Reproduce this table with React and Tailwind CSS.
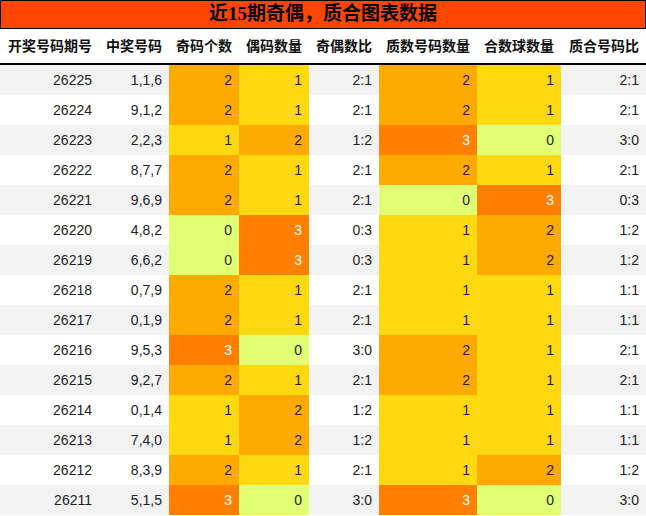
const rows = [
    ['26225', '1,1,6', 2, 1, '2:1', 2, 1, '2:1'],
    ['26224', '9,1,2', 2, 1, '2:1', 2, 1, '2:1'],
    ['26223', '2,2,3', 1, 2, '1:2', 3, 0, '3:0'],
    ['26222', '8,7,7', 2, 1, '2:1', 2, 1, '2:1'],
    ['26221', '9,6,9', 2, 1, '2:1', 0, 3, '0:3'],
    ['26220', '4,8,2', 0, 3, '0:3', 1, 2, '1:2'],
    ['26219', '6,6,2', 0, 3, '0:3', 1, 2, '1:2'],
    ['26218', '0,7,9', 2, 1, '2:1', 1, 1, '1:1'],
    ['26217', '0,1,9', 2, 1, '2:1', 1, 1, '1:1'],
    ['26216', '9,5,3', 3, 0, '3:0', 2, 1, '2:1'],
    ['26215', '9,2,7', 2, 1, '2:1', 2, 1, '2:1'],
    ['26214', '0,1,4', 1, 2, '1:2', 1, 1, '1:1'],
    ['26213', '7,4,0', 1, 2, '1:2', 1, 1, '1:1'],
    ['26212', '8,3,9', 2, 1, '2:1', 1, 2, '1:2'],
    ['26211', '5,1,5', 3, 0, '3:0', 3, 0, '3:0'],
];

const headers = ['开奖号码期号', '中奖号码', '奇码个数', '偶码数量', '奇偶数比', '质数号码数量', '合数球数量', '质合号码比'];

// colour by count value
const cellColor = {
    0: 'bg-[#e1ff73] text-[#222]',
    1: 'bg-[#ffd90f] text-[#222]',
    2: 'bg-[#ffaa00] text-[#222]',
    3: 'bg-[#ff8000] text-white',
};

const grid = 'grid grid-cols-[99px_70px_70px_70px_70px_98px_84px_85px]';

function Cell({ children, className = '' }) {
    return (
        <div className={`flex items-center justify-end pr-[7px] ${className}`}>
            {children}
        </div>
    );
}

export default function App() {
    return (
        <div className="w-[646px] h-[516px] bg-white overflow-hidden" style={{ fontFamily: '"Liberation Sans", "Noto Sans CJK SC", sans-serif' }}>
            <div
                className="h-[29px] bg-[#ff4500] border border-black flex items-center justify-center text-[19px] font-bold text-black"
                style={{ fontFamily: '"Liberation Serif", "Noto Sans CJK SC", serif' }}
            >
                近15期奇偶，质合图表数据
            </div>
            <div className={`${grid} h-[36px] border-b-2 border-black`}>
                {headers.map(h => (
                    <Cell key={h} className="text-[14px] font-bold text-[#111]">{h}</Cell>
                ))}
            </div>
            {rows.map((r, i) => (
                <div key={r[0]} className={`${grid} h-[30px] text-[14px] text-[#222] ${i % 2 === 0 ? 'bg-[#f3f3f3]' : 'bg-white'}`}>
                    <Cell>{r[0]}</Cell>
                    <Cell>{r[1]}</Cell>
                    <Cell className={cellColor[r[2]]}>{r[2]}</Cell>
                    <Cell className={cellColor[r[3]]}>{r[3]}</Cell>
                    <Cell>{r[4]}</Cell>
                    <Cell className={cellColor[r[5]]}>{r[5]}</Cell>
                    <Cell className={cellColor[r[6]]}>{r[6]}</Cell>
                    <Cell>{r[7]}</Cell>
                </div>
            ))}
        </div>
    );
}
